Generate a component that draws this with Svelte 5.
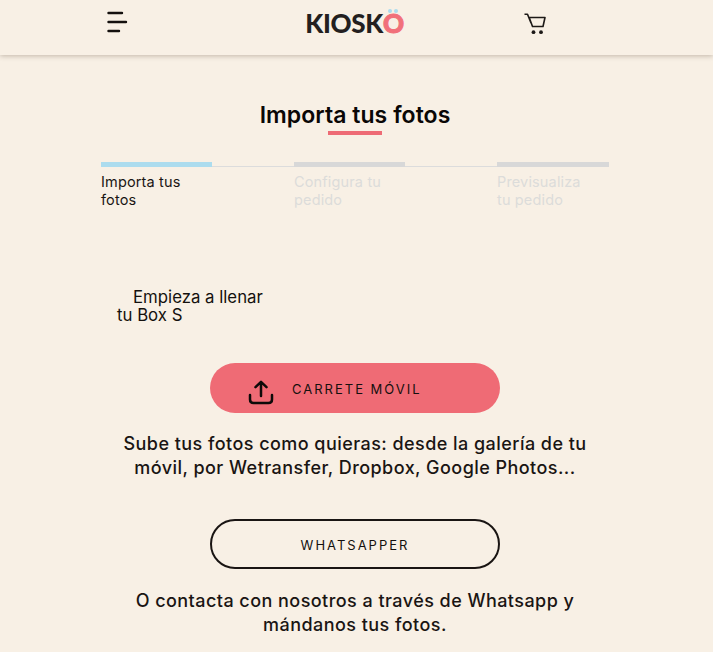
<script>
  const steps = [
    { label: 'Importa tus fotos', active: true },
    { label: 'Configura tu pedido', active: false },
    { label: 'Previsualiza tu pedido', active: false }
  ];
</script>

<header class="top">
  <div class="top-inner">
    <button class="icon-btn menu" aria-label="Menú">
      <svg width="22" height="24" viewBox="0 0 22 24" fill="none" stroke="#14100e" stroke-width="2.4" stroke-linecap="round">
        <path d="M2.500 2H16M2.500 11H20M2.500 20H13"/>
      </svg>
    </button>
    <div class="logo">KIOSK<span class="o">O</span></div>
    <button class="icon-btn cart" aria-label="Carrito">
      <svg width="22" height="24" viewBox="0 0 22 24" fill="none" stroke="#1d1917" stroke-width="1.6">
        <path d="M0.5 1.2H3.5L7 10M5.2 4.5H21L19 13.5H8.5L5.2 4.5Z" stroke-linejoin="round"/>
        <circle cx="9.5" cy="19.2" r="1.9" fill="#1d1917" stroke="none"/>
        <circle cx="17" cy="19.2" r="1.9" fill="#1d1917" stroke="none"/>
      </svg>
    </button>
  </div>
</header>

<main>
  <h1>Importa tus fotos</h1>
  <div class="rule"></div>

  <ol class="steps">
    {#each steps as s}
      <li class:active={s.active}><span>{s.label}</span></li>
    {/each}
  </ol>

  <p class="fill">Empieza a llenar tu Box S</p>

  <button class="btn primary">
    <svg class="up" width="26" height="26" viewBox="0 0 26 26" fill="none" stroke="#0d0a09" stroke-width="2.5" stroke-linecap="round" stroke-linejoin="round">
      <path d="M13 17V3M7.500 8.200L13 2.800L18.500 8.200M2 16V20.500C2 23 3 24 5.500 24H20.500C23 24 24 23 24 20.500V16"/>
    </svg>
    CARRETE MÓVIL
  </button>
  <p class="note first">Sube tus fotos como quieras: desde la galería de tu móvil, por Wetransfer, Dropbox, Google Photos...</p>

  <button class="btn outline">WHATSAPPER</button>
  <p class="note second">O contacta con nosotros a través de Whatsapp y mándanos tus fotos.</p>
</main>

<style>
  :global(body) {
    background: #f8f0e5;
    font-family: "Inter", "Open Sans", sans-serif;
    color: #14100e;
    overflow: hidden;
  }
  .top {
    height: 55px;
    background: #f8f0e5;
    box-shadow: 0 1px 5px rgba(70, 50, 30, 0.3);
  }
  .top-inner {
    height: 100%;
    display: grid;
    grid-template-columns: 106px 22px 1fr 22px 167px;
    align-items: center;
  }
  .icon-btn {
    grid-column: 2;
    background: none;
    border: 0;
    padding: 0;
    height: 24px;
    display: block;
  }
  .menu { margin-top: -9px; }
  .cart { grid-column: 4; margin-top: -6px; }
  .logo {
    grid-column: 3;
    justify-self: center;
    margin-top: -9px;
    margin-left: 57px;
    font: 900 26px/24px "Lato", sans-serif;
    letter-spacing: -0.3px;
    color: #231f20;
  }
  .o {
    position: relative;
    color: #f1707a;
    -webkit-text-stroke: 1px #f1707a;
  }
  .o::before {
    content: "";
    position: absolute;
    left: 5px;
    top: 2px;
    width: 4px;
    height: 4px;
    border-radius: 50%;
    background: #acdcee;
    box-shadow: 6px 0 0 #acdcee;
  }
  main {
    width: 710px;
    display: flex;
    flex-direction: column;
    align-items: center;
    padding-top: 43px;
  }
  h1 {
    margin: 0;
    font-size: 23px;
    line-height: 34px;
    font-weight: 600;
    letter-spacing: 0.05px;
    color: #0a0706;
  }
  .rule {
    width: 54px;
    height: 4px;
    margin-top: -1px;
    background: #ee6b75;
  }
  .steps {
    list-style: none;
    margin: 27px 0 0;
    padding: 0;
    width: 508px;
    display: grid;
    grid-template-columns: 193px 203px 112px;
    border-bottom: 1px solid #dcdcdc;
    height: 4px;
  }
  .steps li {
    width: 111px;
    height: 5px;
    background: #d8d8d8;
    color: #dcdcda;
  }
  .steps li:last-child { width: 112px; }
  .steps li.active {
    background: #acdcee;
    color: #1a1614;
  }
  .steps span {
    display: block;
    padding-top: 11px;
    font-size: 14.5px;
    line-height: 18px;
    letter-spacing: 0.15px;
    width: 90px;
  }
  .fill {
    align-self: flex-start;
    margin: 121px 0 0 117px;
    width: 155px;
    font-size: 16.800px;
    line-height: 18px;
    text-indent: 16px;
    color: #14100e;
  }
  .btn {
    width: 290px;
    height: 50px;
    border-radius: 25px;
    box-sizing: border-box;
    font-family: inherit;
    font-size: 13px;
    font-weight: 400;
    letter-spacing: 2px;
    color: #14100e;
    display: flex;
    align-items: center;
    justify-content: center;
    position: relative;
    padding: 2px 0 0;
  }
  .primary {
    margin-top: 39px;
    background: #ef6b75;
    border: 0;
    justify-content: flex-start;
    padding-left: 82px;
  }
  .up {
    position: absolute;
    left: 38px;
    top: 16px;
  }
  .outline {
    background: transparent;
    border: 2px solid #1a1513;
  }
  .note {
    width: 475px;
    text-align: center;
    font-size: 18px;
    font-weight: 500;
    line-height: 24px;
    letter-spacing: 0.45px;
    color: #1a1513;
  }
  .first { margin: 19px 0 39px; }
  .second { margin: 20px 0 0; }
</style>
